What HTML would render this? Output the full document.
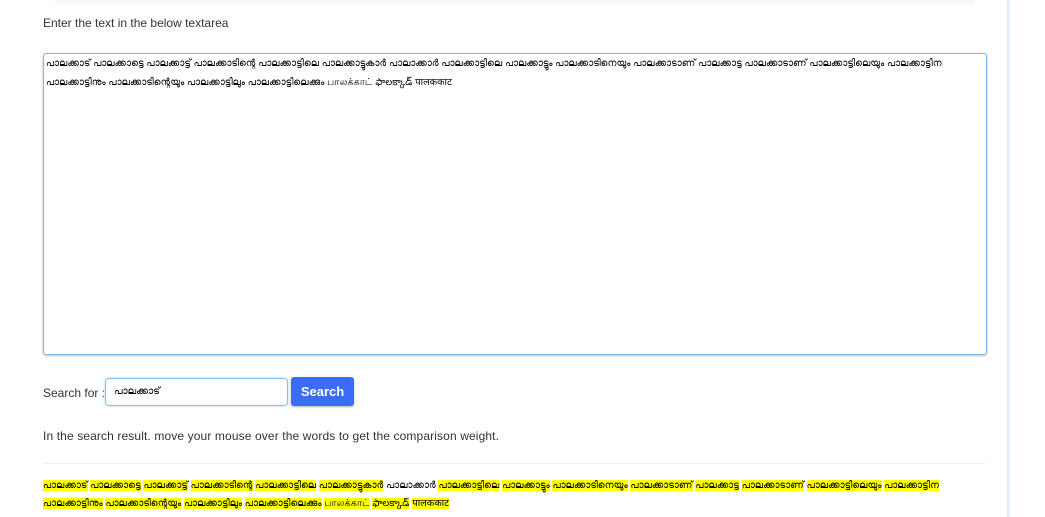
<!DOCTYPE html>
<html><head><meta charset="utf-8"><style>
body{margin:0;width:1045px;height:517px;overflow:hidden;background:#fff;font-family:"Liberation Sans",sans-serif;font-size:12px;color:#333;position:relative}
.topbar{position:absolute;left:55px;top:0;width:920px;height:2px;background:#f5f7fa;box-shadow:0 1px 2px #eef2f7}
.vline{position:absolute;left:1007px;top:0;width:3px;height:517px;background:linear-gradient(to right,#d8e9fb,#eef5fd)}
.p1{position:absolute;left:43px;top:16px}
.ta{position:absolute;left:43px;top:53px;width:938px;height:300px;border:1px solid #7fb4e6;border-radius:3px;box-shadow:0 1px 2px rgba(0,0,0,.25);padding:0 2px;font-size:9.7px;line-height:19px;color:#000;font-family:"Liberation Sans","DejaVu Sans",sans-serif}
.sl{position:absolute;left:43px;top:386px}
.in{position:absolute;left:105px;top:378px;border:1px solid #8cbbe8;border-radius:4px;box-shadow:0 0 3px #bcd9f5;font-size:10px;line-height:26px;padding-left:8px;box-sizing:border-box;width:183px;height:28px;color:#000}
.btn{position:absolute;left:291px;top:377px;width:63px;height:29px;background:#3a6cf6;border-radius:3px;color:#fff;font-weight:bold;font-size:13px;text-align:center;line-height:29px;box-shadow:0 1px 2px rgba(0,0,0,.3)}
.p2{position:absolute;left:43px;top:429px;letter-spacing:0.12px}
.hr{position:absolute;left:43px;top:463px;width:942px;height:1px;background:#eee}
.res{position:absolute;left:43px;top:477px;width:950px;font-size:9.7px;line-height:18px;color:#000;font-family:"Liberation Sans","DejaVu Sans",sans-serif}
.res span{background:#ffff00}
</style></head><body>
<div class="topbar"></div><div class="vline"></div>
<div class="p1">Enter the text in the below textarea</div>
<div class="ta">പാലക്കാട് പാലക്കാട്ടെ പാലക്കാട്ട് പാലക്കാടിന്റെ പാലക്കാട്ടിലെ പാലക്കാട്ടുകാർ പാലാക്കാർ പാലക്കാട്ടിലെ പാലക്കാട്ടും പാലക്കാടിനെയും പാലക്കാടാണ് പാലക്കാട്ട പാലക്കാടാണ് പാലക്കാട്ടിലെയും പാലക്കാട്ടിന പാലക്കാട്ടിനും പാലക്കാടിന്റെയും പാലക്കാട്ടിലും പാലക്കാട്ടിലെക്കും பாலக்காட் ఫాలక్కాడ్ पालककाट</div>
<div class="sl">Search for :</div>
<div class="in">പാലക്കാട്</div>
<div class="btn">Search</div>
<div class="p2">In the search result. move your mouse over the words to get the comparison weight.</div>
<div class="hr"></div>
<div class="res"><span>പാലക്കാട്</span> <span>പാലക്കാട്ടെ</span> <span>പാലക്കാട്ട്</span> <span>പാലക്കാടിന്റെ</span> <span>പാലക്കാട്ടിലെ</span> <span>പാലക്കാട്ടുകാർ</span> പാലാക്കാർ <span>പാലക്കാട്ടിലെ</span> <span>പാലക്കാട്ടും</span> <span>പാലക്കാടിനെയും</span> <span>പാലക്കാടാണ്</span> <span>പാലക്കാട്ട</span> <span>പാലക്കാടാണ്</span> <span>പാലക്കാട്ടിലെയും</span> <span>പാലക്കാട്ടിന</span> <span>പാലക്കാട്ടിനും</span> <span>പാലക്കാടിന്റെയും</span> <span>പാലക്കാട്ടിലും</span> <span>പാലക്കാട്ടിലെക്കും</span> <span>பாலக்காட்</span> <span>ఫాలక్కాడ్</span> <span>पालककाट</span></div>
</body></html>
